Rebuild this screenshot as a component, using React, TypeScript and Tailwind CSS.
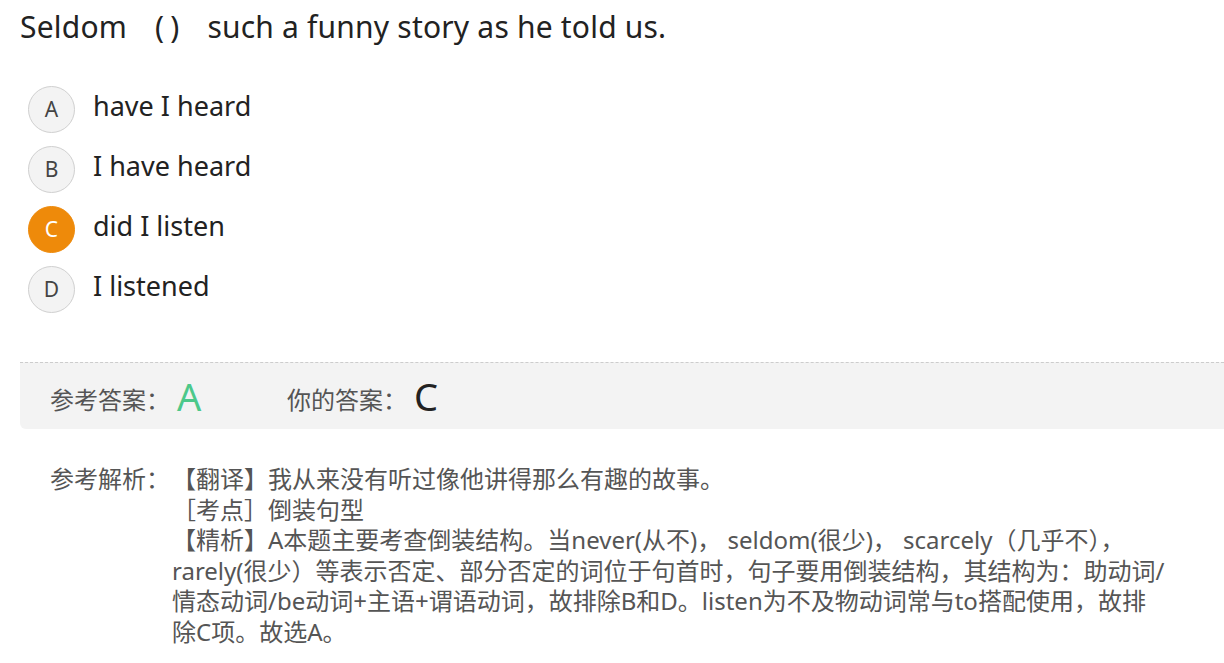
const options = [
  { key: "A", text: "have I heard" },
  { key: "B", text: "I have heard" },
  { key: "C", text: "did I listen", picked: true },
  { key: "D", text: "I listened" },
];

const analysis = [
  "【精析】A本题主要考查倒装结构。当never(从不)， seldom(很少)， scarcely（几乎不），",
  "rarely(很少）等表示否定、部分否定的词位于句首时，句子要用倒装结构，其结构为：助动词/",
  "情态动词/be动词+主语+谓语动词，故排除B和D。listen为不及物动词常与to搭配使用，故排",
  "除C项。故选A。",
];

export default function App() {
  return (
    <div
      className="min-h-[663px] bg-white pl-5 text-[#222]"
      style={{ fontFamily: '"Noto Sans", "Noto Sans CJK SC", sans-serif' }}
    >
      <h1 className="pt-[5px] text-[30px] leading-[44px] font-normal whitespace-nowrap tracking-[0.2px]">
        Seldom
        <span className="mx-[28px]">
          (<span className="ml-[6px]">)</span>
        </span>
        such a funny story as he told us.
      </h1>

      <div className="mt-[37px] flex flex-col gap-[13px] pl-2">
        {options.map((o) => (
          <div key={o.key} className="flex items-center">
            <div
              className={`flex h-[47px] w-[47px] shrink-0 items-center justify-center rounded-full border text-[21px] ${
                o.picked ? "border-[#ee8a0a] bg-[#ee8a0a] text-white" : "border-[#d0d0d0] bg-[#f3f3f3] text-[#444]"
              }`}
            >
              {o.key}
            </div>
            <span className="mb-[8px] ml-[18px] text-[27px] leading-[34px]">{o.text}</span>
          </div>
        ))}
      </div>

      <div className="mt-[49px] flex h-[67px] items-center rounded-bl-md border-t border-dashed border-[#cccccc] bg-[#f3f3f3] pl-[30px]">
        <span className="mt-[8px] text-[24px] text-[#555]">参考答案：</span>
        <span className="ml-[7px] w-[110px] text-[38px] leading-none text-[#4cc88a]">A</span>
        <span className="mt-[8px] text-[24px] text-[#555]">你的答案：</span>
        <span className="ml-[7px] text-[38px] leading-none text-[#222]">C</span>
      </div>

      <div className="mt-[35px] flex pl-[30px] text-[24px] leading-[30.5px] text-[#555]">
        <span className="w-[122px] shrink-0">参考解析：</span>
        <div>
          <div>【翻译】我从来没有听过像他讲得那么有趣的故事。</div>
          <div>［考点］倒装句型</div>
          {analysis.map((line) => (
            <div key={line} className="whitespace-nowrap">
              {line}
            </div>
          ))}
        </div>
      </div>
    </div>
  );
}
